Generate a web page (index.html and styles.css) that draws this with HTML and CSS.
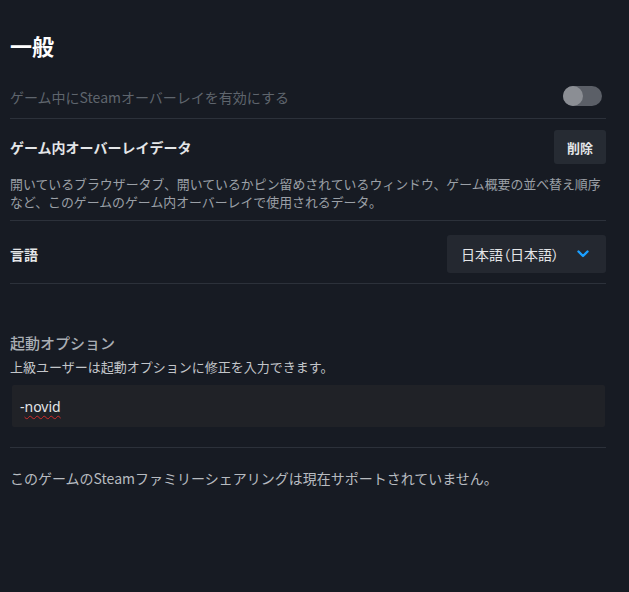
FILE: index.html
```html
<!DOCTYPE html>
<html lang="ja">
<head>
<meta charset="utf-8">
<link rel="stylesheet" href="styles.css">
</head>
<body>
<div class="page">
  <h1 class="title">一般</h1>

  <div class="row row-toggle">
    <span class="label-disabled">ゲーム中にSteamオーバーレイを有効にする</span>
    <span class="toggle"><span class="knob"></span></span>
  </div>

  <div class="section overlay-data">
    <div class="row-head">
      <span class="label">ゲーム内オーバーレイデータ</span>
      <button class="btn">削除</button>
    </div>
    <p class="desc">開いているブラウザータブ、開いているかピン留めされているウィンドウ、ゲーム概要の並べ替え順序など、このゲームのゲーム内オーバーレイで使用されるデータ。</p>
  </div>

  <div class="row row-lang">
    <span class="label">言語</span>
    <div class="dropdown">
      <span class="dd-text">日本語（日本語）</span>
      <svg class="chev" width="12" height="8" viewBox="0 0 12 8"><path d="M1.5 1.5 L6 6 L10.5 1.5" fill="none" stroke="#1a9fff" stroke-width="2.4" stroke-linecap="round" stroke-linejoin="round"/></svg>
    </div>
  </div>

  <div class="section launch">
    <h2 class="subhead">起動オプション</h2>
    <p class="sub">上級ユーザーは起動オプションに修正を入力できます。</p>
    <div class="input">-<span class="spell">novid</span></div>
  </div>

  <p class="family">このゲームのSteamファミリーシェアリングは現在サポートされていません。</p>
</div>
</body>
</html>
```
FILE: styles.css
```css
html, body {
  margin: 0;
  padding: 0;
  background: #171b23;
  height: 100%;
}
body {
  font-family: "Noto Sans CJK JP", "Noto Sans", sans-serif;
  color: #dcdedf;
}
.page {
  width: 596px;
  padding: 29px 0 0 10px;
}
.title {
  margin: 0;
  font-size: 22px;
  line-height: 32px;
  font-weight: 700;
  color: #ffffff;
  height: 47px;
}
.row {
  display: flex;
  align-items: center;
  justify-content: space-between;
  border-bottom: 1px solid #2c313a;
}
.row-toggle {
  height: 42px;
}
.label-disabled {
  font-size: 14px;
  color: #5f656d;
}
.label {
  font-size: 14px;
  font-weight: 700;
  color: #e4e6e8;
}
.toggle {
  width: 39px;
  height: 20px;
  border-radius: 10px;
  background: #5b5f67;
  display: flex;
  align-items: center;
  margin-right: 4px;
  margin-top: -2px;
}
.knob {
  width: 20px;
  height: 20px;
  border-radius: 50%;
  background: #8b8e94;
}
.section {
  border-bottom: 1px solid #2c313a;
}
.overlay-data {
  padding: 11px 0 9px;
}
.row-head {
  display: flex;
  align-items: center;
  justify-content: space-between;
}
.btn {
  height: 34px;
  padding: 0 13px;
  border: none;
  border-radius: 3px;
  background: #262b33;
  color: #e4e6e8;
  font-family: inherit;
  font-size: 13px;
  font-weight: 700;
}
.desc {
  margin: 11px 0 0;
  font-size: 12.9px;
  line-height: 18px;
  color: #9ba0a7;
}
.row-lang {
  padding: 14px 0 10px;
}
.dropdown {
  width: 159px;
  height: 38px;
  box-sizing: border-box;
  padding: 0 17px 0 14px;
  background: #242830;
  border-radius: 3px;
  display: flex;
  align-items: center;
  justify-content: space-between;
}
.dd-text {
  font-size: 14px;
  color: #e4e6e8;
  font-feature-settings: "palt";
}
.chev {
  display: block;
}
.launch {
  padding: 48px 0 20px;
}
.subhead {
  margin: 0;
  font-size: 15px;
  line-height: 22px;
  font-weight: 500;
  color: #a9aeb4;
}
.sub {
  margin: 4px 0 0;
  font-size: 13px;
  line-height: 18px;
  color: #c3c6ca;
}
.input {
  margin: 9px 0 0 2px;
  height: 42px;
  box-sizing: border-box;
  padding: 0 8px;
  background: #202227;
  border-radius: 2px;
  display: flex;
  align-items: center;
  font-family: "Noto Sans", sans-serif;
  font-size: 14px;
  color: #e4e6e8;
  width: 593px;
}
.spell {
  text-decoration: underline wavy #d12b2b;
  text-decoration-thickness: 1px;
  text-underline-offset: 3px;
}
.family {
  margin: 21px 0 0;
  font-size: 14px;
  line-height: 18px;
  color: #b7bbc0;
}
```
